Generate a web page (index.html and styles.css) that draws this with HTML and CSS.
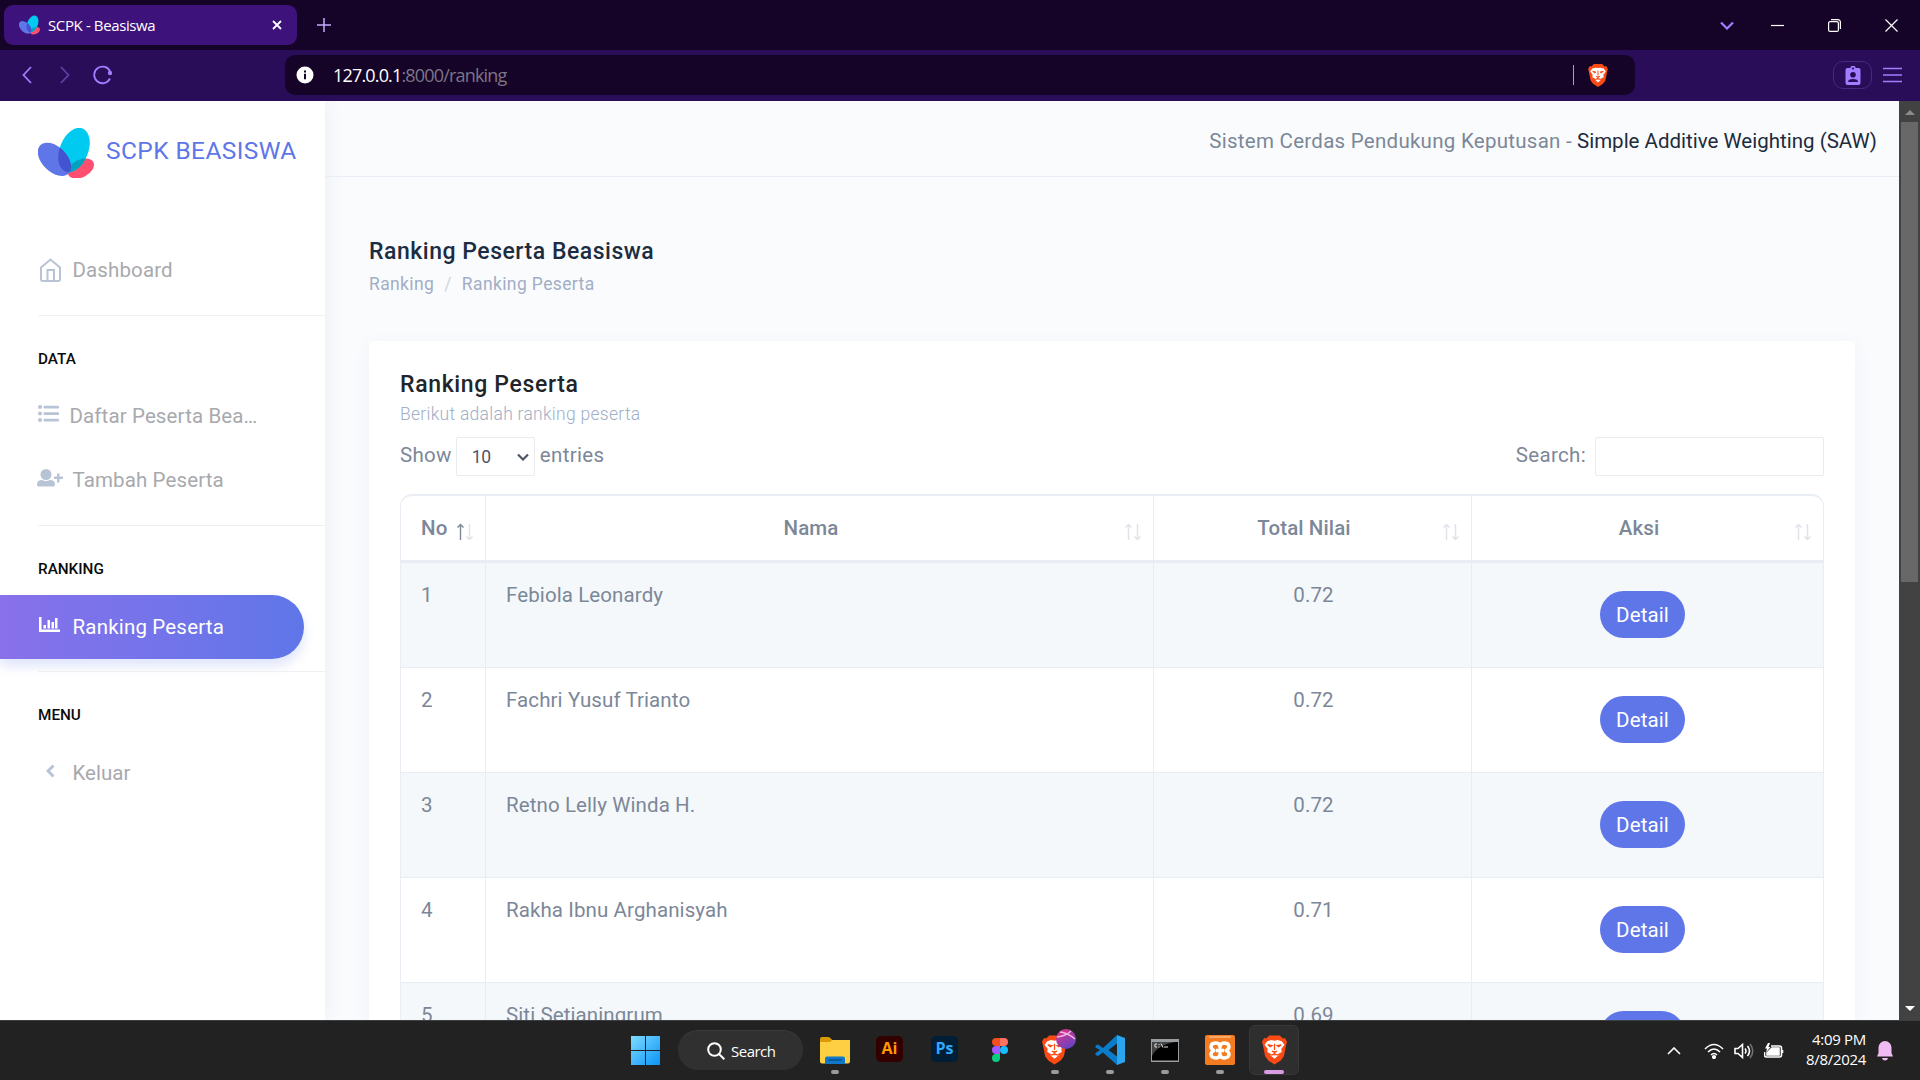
FILE: index.html
```
<!DOCTYPE html>
<html lang="id">
<head>
<meta charset="utf-8">
<title>SCPK - Beasiswa</title>
<link rel="stylesheet" href="styles.css">
</head>
<body>
<svg class="defs" width="0" height="0" aria-hidden="true">
  <clipPath id="cyan-wing"><ellipse cx="36" cy="22" rx="23.200" ry="14.200" transform="rotate(-68 36 22)"/></clipPath>
  <symbol id="logo" viewBox="0 0 56 50">
    <ellipse cx="42.800" cy="40.500" rx="14" ry="8.800" transform="rotate(-26 42.8 40.5)" fill="#ff4f70"/>
    <ellipse cx="36" cy="22" rx="23.200" ry="14.200" transform="rotate(-68 36 22)" fill="#01caf1"/>
    <g clip-path="url(#cyan-wing)"><ellipse cx="42.800" cy="40.500" rx="14" ry="8.800" transform="rotate(-26 42.8 40.5)" fill="#03a1c0"/></g>
    <ellipse cx="16.400" cy="31.300" rx="20" ry="12.400" transform="rotate(45 16.4 31.3)" fill="#5f76e8"/>
    <g clip-path="url(#cyan-wing)"><ellipse cx="16.400" cy="31.300" rx="20" ry="12.400" transform="rotate(45 16.4 31.3)" fill="#4354d0"/></g>
  </symbol>
  <symbol id="brave" viewBox="0 0 24 28">
    <path d="M7 0h10l3 3 2-.5L24 6l-1 4-2 10-3 4-6 4-6-4-3-4L1 10 0 6l2-3.500L4 3Z" fill="#fb4a14"/>
    <path d="M12 5l3-.5 4 1 2.500 3.500-3 4 .5 3-4 2 1 1-4 3.500-4-3.500 1-1-4-2 .5-3-3-4L5 5.500l4-1Z" fill="#fff"/>
    <path d="M5.500 9l4 .8-1.500 1ZM18.500 9l-4 .8 1.500 1ZM12 8v6M9.500 15l2.500 1.500 2.500-1.500M8.500 19l3.500-1.500 3.500 1.500" fill="#fb4a14" stroke="#fb4a14" stroke-width="1.200"/>
  </symbol>
  <symbol id="sort" viewBox="0 0 18 18">
    <path d="M4.500 17V2M1.500 4.500l3-3 3 3" class="sort-up"/>
    <path d="M13.500 1v15M10.500 13.500l3 3 3-3"/>
  </symbol>
</svg>

<div class="screen">
  <div class="tabstrip">
    <div class="tab">
      <svg class="favicon"><use href="#logo"/></svg>
      <span class="tab-title">SCPK - Beasiswa</span>
      <svg class="tab-close" width="10" height="10" viewBox="0 0 10 10"><path d="M1 1l8 8M9 1L1 9"/></svg>
    </div>
    <svg class="new-tab" width="14" height="14" viewBox="0 0 14 14"><path d="M7 0v14M0 7h14"/></svg>
    <div class="window-controls">
      <svg class="tab-search" width="14" height="9" viewBox="0 0 14 9"><path d="M1 1.500l6 6 6-6"/></svg>
      <svg width="13" height="13" viewBox="0 0 13 13"><path d="M0 6.500h13"/></svg>
      <svg width="13" height="13" viewBox="0 0 13 13"><rect x=".6" y="2.600" width="9.800" height="9.800" rx="1.500"/><path d="M3 .6h7a2.400 2.400 0 0 1 2.400 2.400v7"/></svg>
      <svg width="13" height="13" viewBox="0 0 13 13"><path d="M.5.5l12 12M12.500.5l-12 12"/></svg>
    </div>
  </div>

  <div class="toolbar">
    <svg class="nav-icon back" width="10" height="18" viewBox="0 0 10 18"><path d="M9 1L1.500 9 9 17"/></svg>
    <svg class="nav-icon forward" width="10" height="18" viewBox="0 0 10 18"><path d="M1 1l7.500 8L1 17"/></svg>
    <svg class="nav-icon reload" width="20" height="20" viewBox="0 0 20 20"><path d="M17 13.500A8.300 8.300 0 1 1 17.300 7"/><circle cx="17" cy="8" r="2.200"/></svg>
    <div class="omnibox">
      <svg width="18" height="18" viewBox="0 0 18 18"><circle cx="9" cy="9" r="8.500" fill="#fff"/><path d="M8 4.500h2v2H8zM8 7.800h2v5.500H8z" fill="#150427"/></svg>
      <div class="url"><span class="url-host">127.0.0.1</span><span class="url-path">:8000/ranking</span></div>
      <span class="omnibox-divider"></span>
      <svg class="shield"><use href="#brave"/></svg>
    </div>
    <div class="profile">
      <svg width="16" height="19" viewBox="0 0 16 19"><path d="M2 2h3.500a2.500 2.500 0 0 1 5 0H14a2 2 0 0 1 1.500 2v13a2 2 0 0 1-2 2h-11a2 2 0 0 1-2-2V4A2 2 0 0 1 2 2Z" fill="#a37cff"/><circle cx="8" cy="2.500" r="1.100" fill="#2a0d58"/><circle cx="8" cy="8.800" r="2.800" fill="#2a0d58"/><path d="M3 16q0-3 5-3t5 3Z" fill="#2a0d58"/></svg>
    </div>
    <svg class="menu-icon" width="19" height="16" viewBox="0 0 19 16"><path d="M0 1.500h19M0 8h19M0 14.500h19"/></svg>
  </div>

  <div class="viewport">
    <aside class="sidebar">
      <div class="brand"><svg class="brand-logo"><use href="#logo"/></svg><span class="brand-name">SCPK BEASISWA</span></div>
      <nav>
        <a class="item"><span class="ico"><svg class="line-icon" width="21" height="24" viewBox="0 0 21 24"><path d="M1 9.500L10.500 1.500 20 9.500V21a2 2 0 0 1-2 2H3a2 2 0 0 1-2-2ZM7.500 23V12h6.500v11"/></svg></span><span>Dashboard</span></a>
        <hr>
        <div class="group first">DATA</div>
        <a class="item daftar"><span class="ico"><svg width="21" height="17" viewBox="0 0 21 17"><circle cx="2" cy="2" r="2"/><circle cx="2" cy="8.500" r="2"/><circle cx="2" cy="15" r="2"/><rect x="5.500" y=".7" width="15.500" height="2.700" rx="1"/><rect x="5.500" y="7.200" width="15.500" height="2.700" rx="1"/><rect x="5.500" y="13.700" width="15.500" height="2.700" rx="1"/></svg></span><span>Daftar Peserta Bea…</span></a>
        <a class="item tambah"><span class="ico"><svg width="26" height="18" viewBox="0 0 26 18"><circle cx="9" cy="5.500" r="5.500"/><path d="M0 15.500Q0 11 5 11q4 2 8 0 5 0 5 4.500 0 2-1.500 2h-15Q0 17.500 0 15.500ZM20 4.500h2.500v3H26V10h-3.500v3.500H20V10h-3V7.500h3Z"/></svg></span><span>Tambah Peserta</span></a>
        <hr>
        <div class="group">RANKING</div>
        <a class="item active"><span class="ico"><svg width="21" height="15" viewBox="0 0 21 15"><path d="M0 0h2.500v12.500H21V15H0ZM4.500 8h2.500v3.500H4.500ZM8.500 3H11v8.500H8.500ZM12.500 5H15v6.500h-2.500ZM16 1h2.500v10.500H16Z"/></svg></span><span>Ranking Peserta</span></a>
        <hr>
        <div class="group">MENU</div>
        <a class="item keluar"><span class="ico"><svg class="chev" width="9" height="14" viewBox="0 0 9 14"><path d="M7.500 1.500L2 7l5.500 5.500"/></svg></span><span>Keluar</span></a>
      </nav>
    </aside>

    <main class="main">
      <header class="topbar"><span class="topbar-lead">Sistem Cerdas Pendukung Keputusan -</span><span class="topbar-strong">Simple Additive Weighting (SAW)</span></header>
      <div class="heading">
        <h1>Ranking Peserta Beasiswa</h1>
        <div class="crumbs"><span>Ranking</span><span class="slash">/</span><span>Ranking Peserta</span></div>
      </div>
      <section class="card">
        <h2>Ranking Peserta</h2>
        <p class="subtitle">Berikut adalah ranking peserta</p>
        <div class="controls">
          <span>Show</span>
          <span class="select"><span>10</span><svg width="12" height="8" viewBox="0 0 12 8"><path d="M1 1.500l5 5 5-5"/></svg></span>
          <span>entries</span>
          <span class="search-label">Search:</span>
          <span class="search-box"></span>
        </div>
        <div class="table">
          <div class="row head">
            <div class="cell"><span>No</span><svg class="sort asc"><use href="#sort"/></svg></div>
            <div class="cell"><span>Nama</span><svg class="sort"><use href="#sort"/></svg></div>
            <div class="cell"><span>Total Nilai</span><svg class="sort"><use href="#sort"/></svg></div>
            <div class="cell"><span>Aksi</span><svg class="sort"><use href="#sort"/></svg></div>
          </div>
          <div class="row"><div class="cell">1</div><div class="cell">Febiola Leonardy</div><div class="cell">0.72</div><div class="cell"><a class="btn">Detail</a></div></div>
          <div class="row"><div class="cell">2</div><div class="cell">Fachri Yusuf Trianto</div><div class="cell">0.72</div><div class="cell"><a class="btn">Detail</a></div></div>
          <div class="row"><div class="cell">3</div><div class="cell">Retno Lelly Winda H.</div><div class="cell">0.72</div><div class="cell"><a class="btn">Detail</a></div></div>
          <div class="row"><div class="cell">4</div><div class="cell">Rakha Ibnu Arghanisyah</div><div class="cell">0.71</div><div class="cell"><a class="btn">Detail</a></div></div>
          <div class="row"><div class="cell">5</div><div class="cell">Siti Setianingrum</div><div class="cell">0.69</div><div class="cell"><a class="btn">Detail</a></div></div>
        </div>
      </section>
    </main>

    <div class="scrollbar">
      <svg width="10" height="5" viewBox="0 0 10 5"><path d="M0 5l5-5 5 5Z" fill="#8b8b8b"/></svg>
      <div class="thumb"></div>
      <svg class="down" width="10" height="5" viewBox="0 0 10 5"><path d="M0 0l5 5 5-5Z" fill="#fff"/></svg>
    </div>
  </div>

  <div class="taskbar">
    <div class="apps">
      <div class="start"><svg width="29" height="29" viewBox="0 0 29 29"><defs><linearGradient id="win" x1="0" y1="0" x2="1" y2="1"><stop offset="0" stop-color="#7fdcff"/><stop offset="1" stop-color="#0a93f8"/></linearGradient></defs><path d="M0 0h14v14H0ZM15 0h14v14H15ZM0 15h14v14H0ZM15 15h14v14H15Z" fill="url(#win)"/></svg></div>
      <div class="task-search"><svg width="18" height="18" viewBox="0 0 18 18"><circle cx="7.500" cy="7.500" r="6.300"/><path d="M12 12l5.300 5.300"/></svg><span>Search</span></div>
      <div class="app"><svg width="30" height="27" viewBox="0 0 30 27"><path d="M0 2q0-2 2-2h7l4 3.500h15v8H0Z" fill="#d99a06"/><path d="M0 5h10l2-2h18v21.500a2 2 0 0 1-2 2H2a2 2 0 0 1-2-2Z" fill="#fecf42"/><path d="M5 27v-5.500a2 2 0 0 1 2-2h16a2 2 0 0 1 2 2V27Z" fill="#0f78c8"/><path d="M8.500 23h13" stroke="#06508c" stroke-width="1.500"/></svg><i class="dot"></i></div>
      <div class="app"><span class="adobe ai">Ai</span></div>
      <div class="app"><span class="adobe ps">Ps</span></div>
      <div class="app"><svg width="16" height="24" viewBox="0 0 16 24"><path d="M8 0H4a4 4 0 0 0 0 8h4Z" fill="#f24e1e"/><path d="M8 0h4a4 4 0 0 1 0 8H8Z" fill="#ff7262"/><path d="M8 8H4a4 4 0 0 0 0 8h4Z" fill="#a259ff"/><circle cx="12" cy="12" r="4" fill="#1abcfe"/><path d="M8 16H4a4 4 0 1 0 4 4Z" fill="#0acf83"/></svg></div>
      <div class="app"><svg width="25" height="30"><use href="#brave"/></svg><svg class="ball" width="20" height="20" viewBox="0 0 20 20"><defs><linearGradient id="ballg" x1=".2" y1="0" x2=".8" y2="1"><stop offset="0" stop-color="#e0348a"/><stop offset="1" stop-color="#5a45c8"/></linearGradient></defs><circle cx="10" cy="10" r="10" fill="url(#ballg)"/><path d="M1 8q9-1 14-6M4 3q8 1 15 7" fill="none" stroke="#f0b8e0" stroke-width="1.300"/></svg><i class="dot"></i></div>
      <div class="app"><svg width="30" height="30" viewBox="0 0 30 30"><path d="M22 0L8 13 3 9.500.5 10.500v2L5 15 .5 18v2L3 21l5-3.500L22 30V21.500L13.500 15 22 8.500Z" fill="#0b7cc9"/><path d="M22 0l8 3v24l-8 3Z" fill="#2aa5f0"/></svg><i class="dot"></i></div>
      <div class="app"><svg width="28" height="23" viewBox="0 0 28 23"><rect width="28" height="23" fill="#999da0"/><rect x="1" y="3" width="26" height="18.500" fill="#000"/><path d="M1 3h23Q6 6 1 17Z" fill="#444"/><path d="M6 5H4v3h2M8 5v1M8 7.500v1M10 4.500l2 4M13 8h4" stroke="#ddd" fill="none"/></svg><i class="dot"></i></div>
      <div class="app"><svg width="30" height="30" viewBox="0 0 30 30"><rect width="30" height="30" rx="2" fill="#f37c22"/><path d="M4 2h22" stroke="#ffd4ae"/><path d="M11 8C5 8 4.500 13.500 9 15.500c-4.500 2-4 7.500 2 7.500 3 0 4-2 4-4.500 0 2.500 1 4.500 4 4.500 6 0 6.500-5.500 2-7.500 4.500-2 4-7.500-2-7.500-3 0-4 2-4 4.500C15 10 14 8 11 8ZM11 15.500h8" fill="none" stroke="#fff" stroke-width="3.400" stroke-linejoin="round"/></svg><i class="dot"></i></div>
      <div class="app current"><svg width="25" height="30"><use href="#brave"/></svg><i class="dot"></i></div>
    </div>
    <div class="tray">
      <svg width="14" height="8" viewBox="0 0 14 8"><path d="M1 7l6-6 6 6"/></svg>
      <svg class="wifi" width="20" height="16" viewBox="0 0 20 16"><path d="M1 6q9-9 18 0M4 9q6-6 12 0M7 12q3-3 6 0"/><circle cx="10" cy="14" r="1.300"/></svg>
      <svg class="volume" width="20" height="16" viewBox="0 0 20 16"><path d="M1 5.500h3L8.500 1.500v13L4 10.500H1ZM11 5.500q2 2.500 0 5M13.500 3q4 5 0 10"/><path d="M16 1q5.500 7 0 14" opacity=".35"/></svg>
      <svg class="battery" width="20" height="16" viewBox="0 0 20 16"><path d="M7 3h8.500A2 2 0 0 1 17.500 5v7a2 2 0 0 1-2 2h-13a2 2 0 0 1-2-2V9M18.500 7v3"/><path d="M8 5h7v7H3v-2Z" fill="#fff"/><path d="M4 0L1 5.500h2L2 9.500 6.500 4h-2L6 0Z" fill="#fff" stroke="none"/></svg>
      <div class="clock"><span>4:09 PM</span><span>8/8/2024</span></div>
      <svg class="bell" width="16" height="20" viewBox="0 0 16 20"><path d="M8 0a6.500 6.500 0 0 1 6.500 6.500V12l1.500 3.500H0L1.500 12V6.500A6.500 6.500 0 0 1 8 0ZM5 17h6q-.5 2.500-3 2.500T5 17Z" fill="#f0bbf2"/></svg>
    </div>
  </div>
</div>
</body>
</html>
```
FILE: styles.css
```
* { box-sizing: border-box; }
body { margin: 0; width: 1920px; height: 1080px; overflow: hidden; font-family: Roboto, "Liberation Sans", sans-serif; font-size: 20.5px; line-height: 30px; color: #7c8798; }
svg { display: block; flex: none; fill: none; }
.defs { position: absolute; }
.screen { display: flex; flex-direction: column; width: 1920px; height: 1080px; }

/* browser chrome */
.tabstrip { height: 50px; flex: none; display: flex; align-items: center; background: #150427; padding: 0 22px 0 4px; }
.tab { width: 293px; height: 40px; border-radius: 9px; background: #3e127b; display: flex; align-items: center; padding: 0 15px; }
.favicon { width: 21px; height: 20px; margin-right: 8px; }
.tab-title { flex: 1; color: #fff; font: 15px/20px "Open Sans", sans-serif; letter-spacing: -.38px; padding-bottom: 1px; }
.tab-close path { stroke: #fff; stroke-width: 1.8; }
.new-tab { margin-left: 20px; }
.new-tab path { stroke: #c5acff; stroke-width: 1.5; }
.window-controls { margin-left: auto; display: flex; align-items: center; }
.window-controls svg { margin-left: 44px; }
.window-controls svg:nth-child(2) { margin-left: 37px; }
.window-controls path, .window-controls rect { stroke: #fff; stroke-width: 1.2; }
.window-controls .tab-search path { stroke: #a37cff; stroke-width: 2.2; }
.toolbar { height: 51px; flex: none; display: flex; align-items: center; background: #2a0d58; padding: 0 18px 1px 22px; }
.nav-icon path { stroke: #a37cff; stroke-width: 1.8; }
.nav-icon circle { fill: #a37cff; }
.forward { margin-left: 28px; opacity: .45; }
.reload { margin-left: 23px; }
.omnibox { width: 1350px; height: 40px; margin-left: 172px; border-radius: 10px; background: #150427; display: flex; align-items: center; padding: 0 27px 0 11px; }
.url { flex: 1; margin-left: 19px; font: 18px/24px "Open Sans", sans-serif; letter-spacing: -.83px; }
.url-host { color: #fff; }
.url-path { color: #7d7488; }
.omnibox-divider { width: 1px; height: 20px; background: #a9a3b0; margin-right: 14px; }
.shield { width: 20px; height: 23px; }
.profile { width: 39px; height: 28px; margin-left: 198px; border: 1px solid #492780; border-radius: 10px; display: flex; align-items: center; justify-content: center; }
.menu-icon { margin-left: 11px; }
.menu-icon path { stroke: #a37cff; stroke-width: 1.6; }

/* page */
.viewport { height: 919px; flex: none; display: flex; overflow: hidden; background: #fafbfd; }
.sidebar { width: 325px; flex: none; background: #fff; box-shadow: 1px 0 20px rgba(0, 20, 110, .06); }
.brand { height: 137px; padding: 27px 0 0 38px; display: flex; }
.brand-logo { width: 56px; height: 50px; }
.brand-name { color: #5f76e8; font-size: 24.5px; line-height: 46px; margin-left: 12px; letter-spacing: .4px; white-space: nowrap; }
.item { height: 64px; display: flex; align-items: center; color: #a8a9ad; letter-spacing: .12px; white-space: nowrap; }
.keluar { letter-spacing: 0; padding-bottom: 1px; }
.ico { width: 72.500px; padding-left: 38px; flex: none; }
.ico svg { fill: #b9c3d6; }
.ico .line-icon { fill: none; stroke: #b9c3d6; stroke-width: 2; margin-left: 2px; }
.ico .chev { fill: none; stroke: #b9c3d6; stroke-width: 3; margin: -4px 0 0 8px; }
.daftar .ico { width: 69.500px; margin-top: -5px; }
.tambah .ico { padding-left: 37px; margin-top: -5px; }
.active { width: 304px; padding-bottom: 1px; border-radius: 0 32px 32px 0; background: linear-gradient(90deg, #8971ea, #7f72ea 20%, #7574ea 50%, #5f76e8); color: #fff; letter-spacing: .18px; box-shadow: 0 7px 12px rgba(95, 118, 232, .2); }
.active .ico { padding-left: 39px; margin-top: -5px; }
.active .ico svg { fill: #fff; }
hr { border: 0; height: 1px; margin: 13px 0 0 38px; background: #eff0f2; }
.active + hr { margin-top: 12px; }
.group { height: 69px; padding: 28px 0 0 38px; color: #0b0b0b; font-size: 15.3px; font-weight: 500; line-height: 30px; }
.first { height: 68px; }

.main { flex: 1; min-width: 0; }
.topbar { height: 76px; border-bottom: 1px solid #e8eef6; display: flex; justify-content: flex-end; align-items: center; gap: 5px; padding: 4px 22px 0 0; }
.topbar-lead { letter-spacing: .27px; }
.topbar-strong { color: #212b3b; }
.heading { padding: 60px 0 0 44px; height: 164px; }
h1, h2 { margin: 0; font-size: 23px; font-weight: 500; line-height: 30px; letter-spacing: .52px; }
h1 { color: #1c2d41; }
h2 { color: #212529; letter-spacing: .65px; }
.crumbs { display: flex; gap: 10px; font-size: 17.5px; line-height: 34px; letter-spacing: .38px; color: #a1aec6; }
.slash { color: #cfd4dc; }
.card { width: 1486px; height: 720px; margin-left: 44px; border-radius: 5px; background: #fff; padding: 29px 31px; box-shadow: 0 5px 20px rgba(60, 80, 180, .05); }
.subtitle { margin: 0; font-size: 17.5px; line-height: 28px; font-weight: 300; letter-spacing: .28px; color: #a1aec6; }
.controls { display: flex; height: 57px; margin-top: 9px; line-height: 36px; letter-spacing: .32px; }
.select { width: 79px; height: 39px; margin: 0 5px 0 4px; border: 1px solid #e9ecef; border-radius: 2px; display: flex; align-items: center; justify-content: space-between; padding: 0 5px 0 15px; font-size: 17.5px; letter-spacing: -.5px; color: #4f5467; }
.select path { stroke: #4f5467; stroke-width: 2.2; }
.search-label { margin-left: auto; }
.search-box { width: 229px; height: 39px; margin-left: 9px; border: 1px solid #e9ecef; border-radius: 2px; }
.table { border: 1px solid #e8eef3; border-top-width: 2px; border-radius: 12px 12px 0 0; }
.row { height: 105px; display: grid; grid-template-columns: 84px 668px 318px 1fr; border-bottom: 1px solid #e8edf3; letter-spacing: .1px; }
.row:nth-child(even) { background: #f4f8fb; }
.head { height: 67px; border-bottom: 3px solid #e8edf4; font-weight: 500; }
.cell { border-left: 1px solid #e8edf3; padding: 17px 20px; }
.cell:first-child { border-left: 0; }
.cell:nth-child(n+3) { text-align: center; }
.row:not(.head) .cell:nth-child(3) { padding-left: 22px; }
.head .cell { display: flex; justify-content: center; align-items: flex-start; padding: 17px 11px 0 20px; }
.head .cell span { flex: 1; text-align: center; margin-right: 8px; }
.head .cell:first-child span { flex: none; margin-right: auto; }
.sort { --up: #dfe2e8; width: 18px; height: 18px; margin-top: 10px; stroke: #dfe2e8; stroke-width: 1.4; }
.sort.asc { --up: #7c8798; }
.sort-up { stroke: var(--up); }
.btn { display: block; width: 85px; height: 47px; margin: 11px auto 0; border-radius: 24px; background: #5f76e8; color: #fff; line-height: 48px; position: relative; left: -5px; }

.scrollbar { width: 21px; flex: none; background: #424242; display: flex; flex-direction: column; align-items: center; padding-top: 9px; }
.thumb { width: 17px; height: 460px; margin-top: 7px; background: #686868; }
.down { margin-top: 424px; }

/* taskbar */
.taskbar { height: 60px; flex: none; background: #222; border-top: 1px solid #3c4040; display: flex; }
.apps { display: flex; align-items: center; margin-left: 631px; padding-bottom: 1px; }
.task-search { width: 125px; height: 40px; margin: 0 4px 0 18px; border-radius: 20px; background: #303030; border-top: 1px solid #3c3c3c; display: flex; align-items: center; padding-left: 29px; gap: 6px; color: #fff; font: 15px/20px "Open Sans", sans-serif; letter-spacing: -.5px; }
.task-search svg { stroke: #fff; stroke-width: 2; }
.app { width: 55px; height: 50px; display: flex; align-items: center; justify-content: center; position: relative; }
.dot { position: absolute; left: 24px; bottom: 1px; width: 8px; height: 4px; border-radius: 2px; background: #9b9b9b; }
.current { width: 50px; margin-left: 2px; border-radius: 6px; background: #2e2e2e; border: 1px solid #383838; }
.current .dot { width: 20px; left: 14px; bottom: 0; background: #d99be2; }
.adobe { width: 27px; height: 26px; margin-top: -3px; border-radius: 5px; font: 700 16px/24px "Open Sans", sans-serif; text-align: center; }
.ai { background: #330000; color: #ff9a00; }
.ps { background: #001e36; color: #31a8ff; }
.ball { position: absolute; left: 29px; top: 4px; }
.tray { margin-left: auto; display: flex; align-items: center; padding-right: 27px; }
.tray svg { stroke: #fff; stroke-width: 1.6; }
.wifi { margin-left: 23px; }
.wifi circle { fill: #fff; }
.volume { margin-left: 10px; }
.battery { margin-left: 10px; }
.clock { width: 82px; padding-bottom: 4px; display: flex; flex-direction: column; align-items: flex-end; color: #fff; font: 15px/20px "Open Sans", sans-serif; letter-spacing: -.3px; }
.tray .bell { stroke: none; margin-left: 11px; }
```
